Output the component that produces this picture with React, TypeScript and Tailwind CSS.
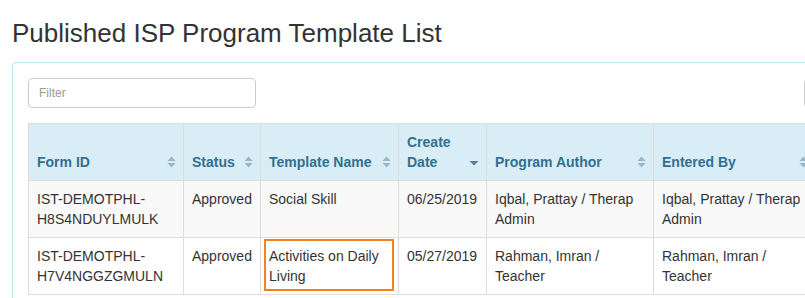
import React from "react";

function SortBoth() {
  return (
    <svg width="9" height="12" viewBox="0 0 9 12">
      <path d="M4.5 0.5 L8.5 5 L0.5 5 Z" fill="#98b5c9" />
      <path d="M0.5 7 L8.5 7 L4.5 11.5 Z" fill="#98b5c9" />
    </svg>
  );
}

function SortDesc() {
  return (
    <svg width="10" height="12" viewBox="0 0 10 12">
      <path d="M0.5 5 L9.5 5 L5 9.5 Z" fill="#5b7f98" />
    </svg>
  );
}

type Col = { label: React.ReactNode; w: string; icon: "both" | "desc" };

const cols: Col[] = [
  { label: "Form ID", w: "w-[155px]", icon: "both" },
  { label: "Status", w: "w-[77px]", icon: "both" },
  { label: "Template Name", w: "w-[138px]", icon: "both" },
  { label: <>Create<br />Date</>, w: "w-[88px]", icon: "desc" },
  { label: "Program Author", w: "w-[167px]", icon: "both" },
  { label: "Entered By", w: "w-[162px]", icon: "both" },
];

const rows = [
  ["IST-DEMOTPHL-H8S4NDUYLMULK", "Approved", "Social Skill", "06/25/2019", "Iqbal, Prattay / Therap Admin", "Iqbal, Prattay / Therap Admin"],
  ["IST-DEMOTPHL-H7V4NGGZGMULN", "Approved", "Activities on Daily Living", "05/27/2019", "Rahman, Imran / Teacher", "Rahman, Imran / Teacher"],
];

export default function App() {
  return (
    <div
      className="w-[805px] h-[298px] overflow-hidden bg-white text-[#333]"
      style={{ fontFamily: '"Liberation Sans", Arial, sans-serif' }}
    >
      <div className="pl-3 pt-[19px]">
        <h1 className="text-[26px] leading-[28px] font-normal text-[#333]">
          Published ISP Program Template List
        </h1>
        <div className="mt-[15px] w-[900px] border border-[#bce8f1] rounded-[4px] p-[15px]">
          <div className="flex items-center">
            <div className="w-[228px] h-[30px] border border-[#ccc] rounded-[4px] flex items-center pl-[10px] text-[12px] text-[#999]">
              Filter
            </div>
            <div className="ml-[548px] w-[60px] h-[29px] border border-[#ccc] rounded-[4px]" />
          </div>
          <table
            className="mt-[15px] table-fixed border-separate border-spacing-0 border-l border-t border-[#ddd] text-[14px] leading-[20px]"
            style={{ width: 788 }}
          >
            <thead>
              <tr className="bg-[#d9edf7]">
                {cols.map((c, i) => (
                  <th
                    key={i}
                    className={`${c.w} relative align-bottom text-left font-bold text-[#31708f] px-2 py-2 border-r border-b border-[#ddd]`}
                  >
                    {c.label}
                    <span className="absolute right-[7px] bottom-2 h-5 flex items-center">
                      {c.icon === "both" ? <SortBoth /> : <SortDesc />}
                    </span>
                  </th>
                ))}
              </tr>
            </thead>
            <tbody>
              {rows.map((r, ri) => (
                <tr key={ri} className={ri === 0 ? "bg-[#f9f9f9]" : "bg-white"}>
                  {r.map((cell, ci) => (
                    <td
                      key={ci}
                      className="relative align-top px-2 py-2 border-r border-b border-[#ddd] text-[#333]"
                    >
                      {ci === 0 ? (
                        <>
                          {cell.split("-").slice(0, 2).join("-")}-
                          <br />
                          {cell.split("-").slice(2).join("-")}
                        </>
                      ) : (
                        cell
                      )}
                      {ri === 1 && ci === 2 && (
                        <span className="absolute left-[3px] right-[4px] top-[1px] bottom-[3px] border-2 border-[#f5821f]" />
                      )}
                    </td>
                  ))}
                </tr>
              ))}
            </tbody>
          </table>
        </div>
      </div>
    </div>
  );
}
